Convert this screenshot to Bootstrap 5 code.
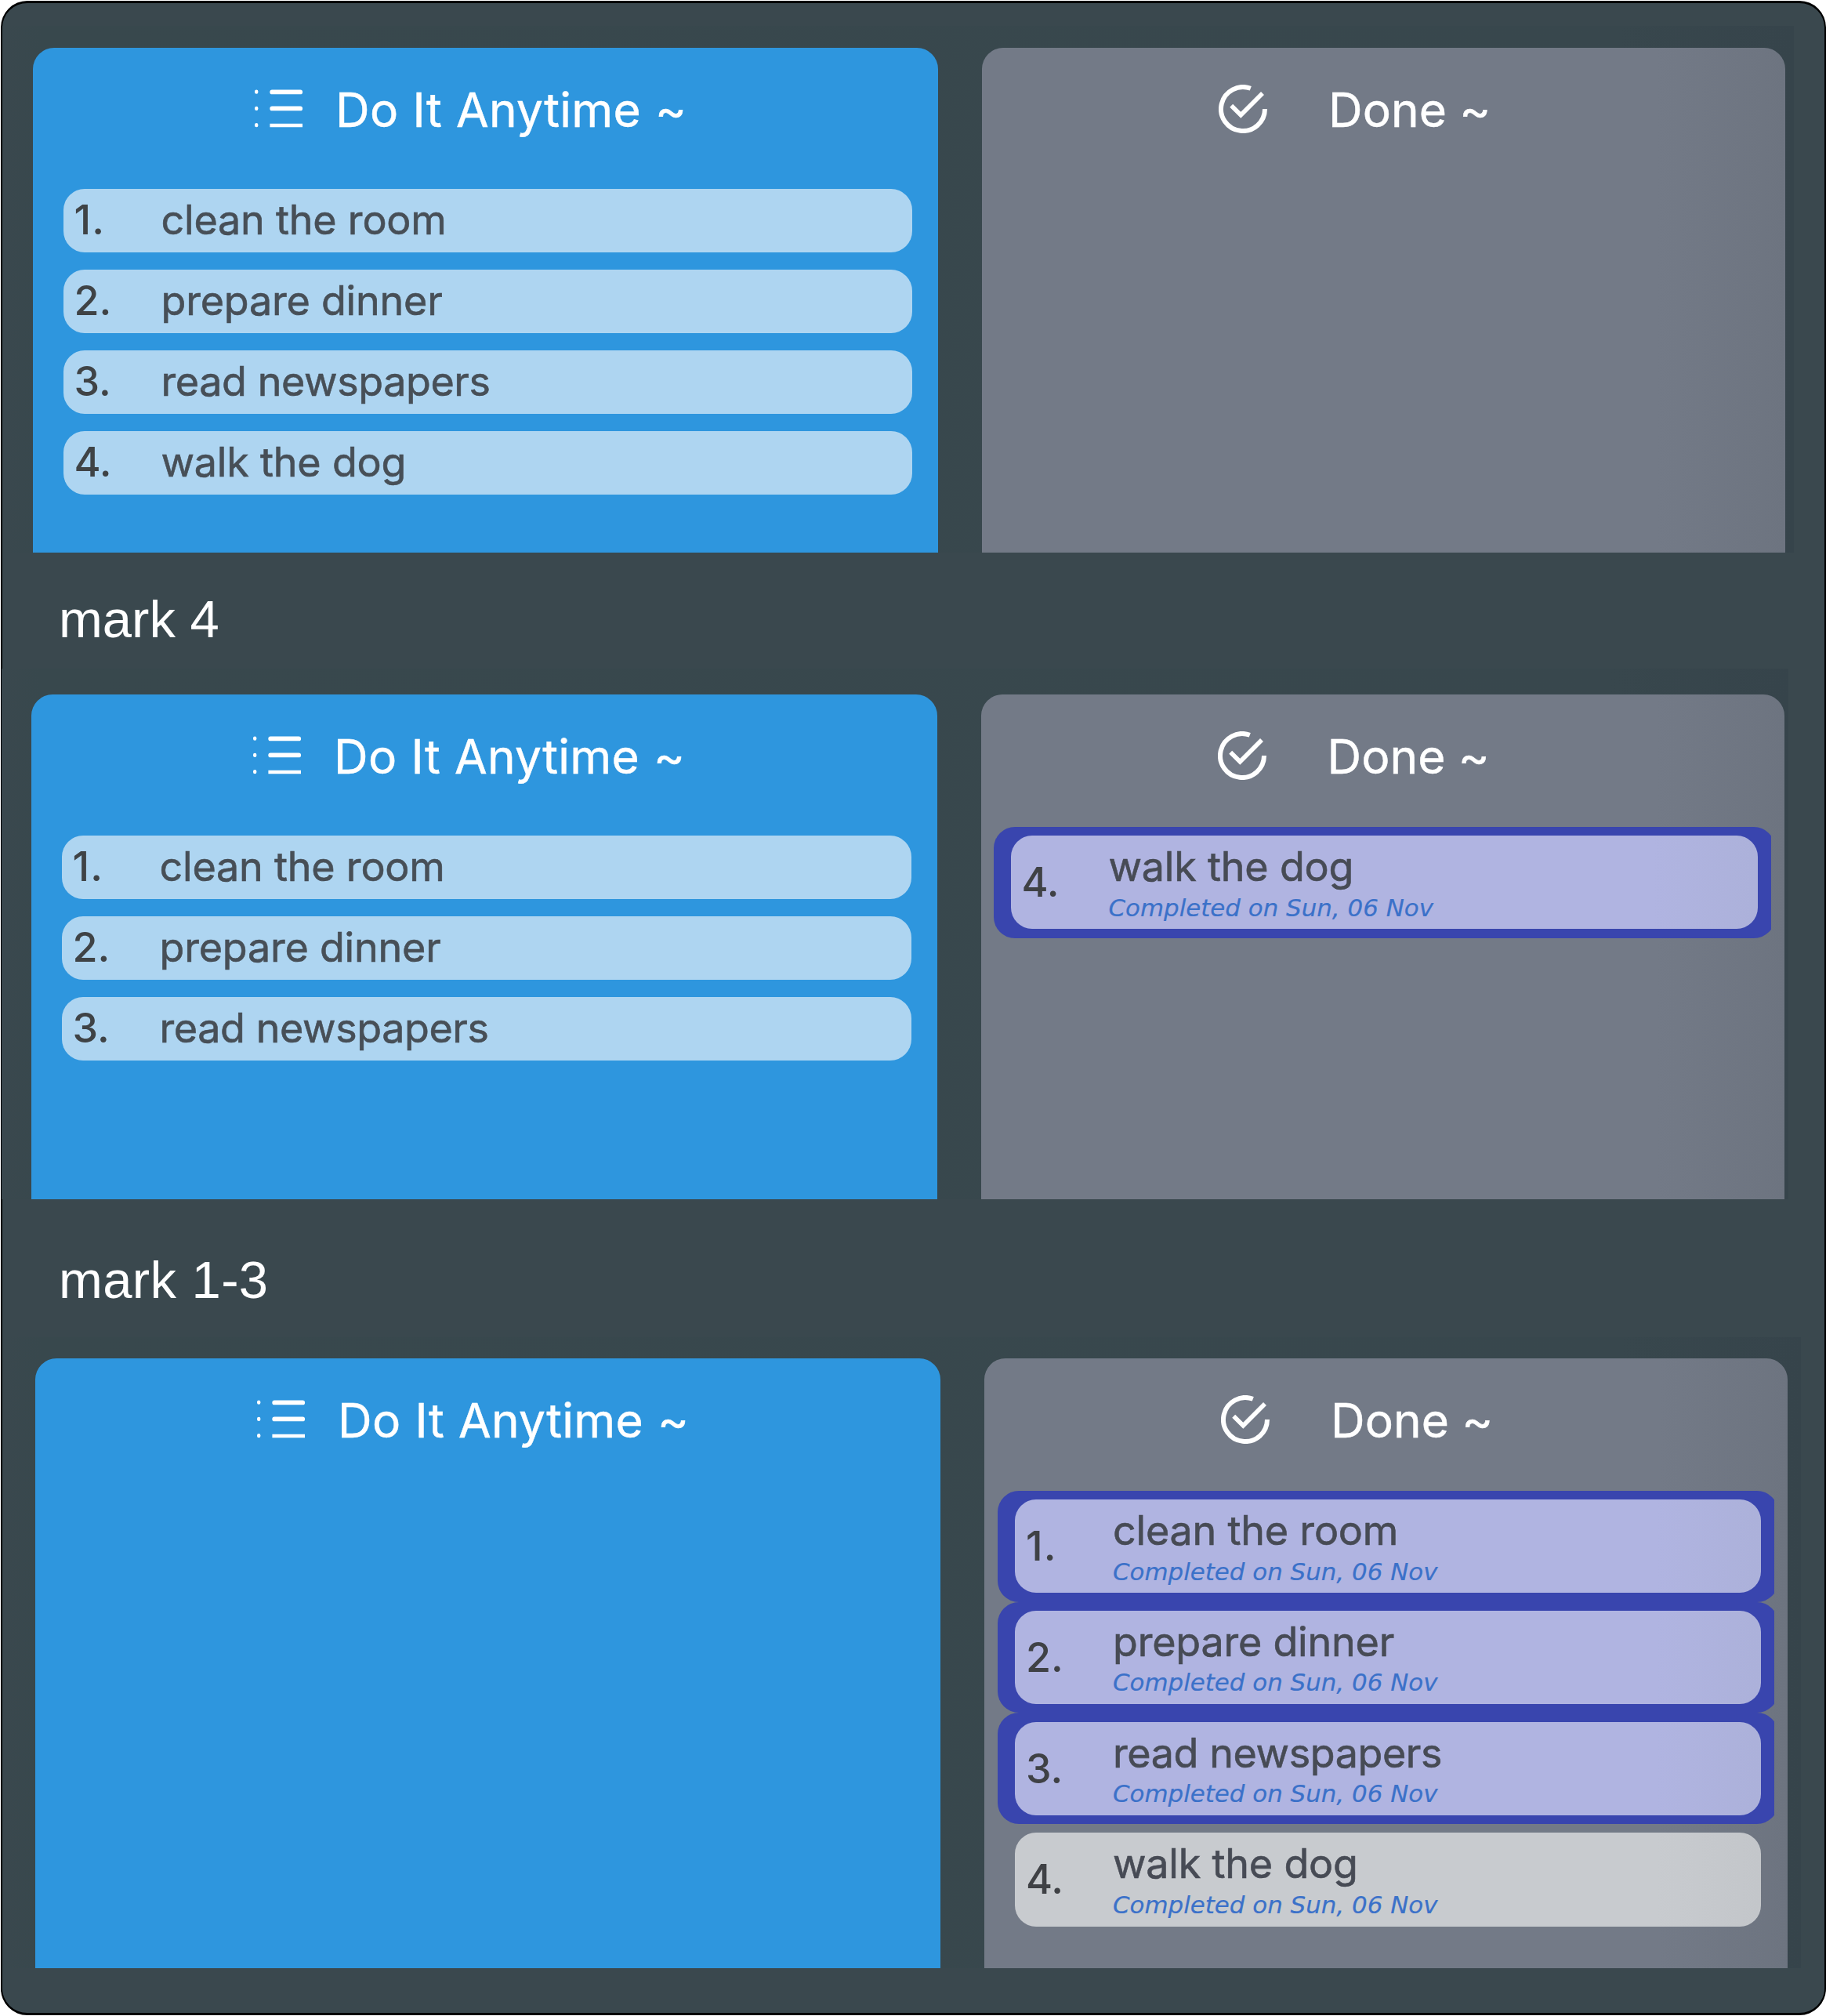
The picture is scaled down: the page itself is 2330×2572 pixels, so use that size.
<!DOCTYPE html>
<html lang="en">
<head>
<meta charset="utf-8">
<meta name="viewport" content="width=device-width, initial-scale=1">
<title>Task board</title>
<link href="https://cdn.jsdelivr.net/npm/bootstrap@5.3.0/dist/css/bootstrap.min.css" rel="stylesheet">
<script src="https://cdn.jsdelivr.net/npm/bootstrap@5.3.0/dist/js/bootstrap.bundle.min.js"></script>
<style>
  body { font-family: Inter, "Liberation Sans", sans-serif; background: #fff; }
  .window-frame {
    width: 2329px; height: 2570px; margin: 1px 0 0 1px;
    border: solid #000; border-width: 3px 2px; border-radius: 34px;
    background: #3a484e;
  }
  .board { gap: 56px; background: linear-gradient(90deg, #3a484e 0, #38484d 50px, #38474d 90%, #36444b 100%); }
  .board-a { margin: 29px 39px 0 0; padding: 28px 0 0 39px; }
  .board-b { margin: 0 46px 0 -1px; padding: 33px 0 0 38px; }
  .board-c { margin: 0 30px 0 0; padding: 27px 0 0 42px; }
  .panel { border-radius: 27px 27px 0 0; height: 644px; }
  .board-c .panel { height: 777.7px; }
  .panel-todo { width: 1155px; background: #2e96de; }
  .board-b .panel-todo { width: 1155.5px; }
  .panel-done { width: 1025px; background: linear-gradient(90deg, #737a87 0, #737a87 84%, #6d7480 100%); }
  .panel-head { height: 158px; color: #fff; font-size: 60.4px; line-height: 158px; white-space: nowrap; -webkit-text-stroke: .5px #fff; }
  .panel-todo .panel-head { padding-left: 283px; letter-spacing: .3px; word-spacing: .8px; }
  .panel-done .panel-head { padding-left: 302px; letter-spacing: .1px; word-spacing: -.8px; }
  .panel-todo .glyph { width: 62px; height: 62px; margin-right: 41px; }
  .panel-done .glyph { width: 62px; height: 62px; margin-right: 78px; }
  .glyph { position: relative; top: -1px; }
  .todo-list { gap: 22px; padding: 22px 33px 0 38.5px; margin: 0; }
  .task { border-radius: 27px; color: #474f57; font-size: 52px; letter-spacing: -.2px; white-space: nowrap; padding-left: 14px; -webkit-text-stroke: .6px currentColor; }
  .task-num { width: 111px; color: #3f4346; font-weight: 500; letter-spacing: 0; -webkit-text-stroke: 0; }
  .num-one { letter-spacing: 1.2px; }
  .title-long { letter-spacing: -.4px; }
  .task-todo { height: 81px; line-height: 80.6px; background: #aed5f1; }
  .done-list { margin: 11px 17px 0; overflow: hidden; }
  .board-b .done-list { margin-left: 16px; }
  .slot { height: 141.7px; margin-right: -5px; padding: 11.3px 22px; border-radius: 27px; }
  .slot-new { background: #3945ae; }
  .task-done { height: 119.2px; background: linear-gradient(90deg, #b0b4e1 86%, #acb1da 100%); color: #474b55; }
  .slot-old .task-done { background: linear-gradient(90deg, #c8cbcf 86%, #c3c6ca 100%); }
  .task-done .task-num { line-height: 119px; color: #3f4145; }
  .task-name { line-height: 79.500px; }
  .task-date { font: italic 30.9px/25px "DejaVu Sans", Verdana, sans-serif; letter-spacing: 0; color: #3b71c9; -webkit-text-stroke: .2px #3b71c9; }
  .caption-row { color: #fff; font: 67px/126px "Liberation Sans", Arial, sans-serif; padding-left: 72px; }
  .caption-a { height: 148px; padding-top: 22px; }
  .caption-b { height: 176px; padding-top: 39.5px; letter-spacing: .4px; }
</style>
</head>
<body>
<svg class="d-none" xmlns="http://www.w3.org/2000/svg">
  <symbol id="icon-list" viewBox="0 0 62 62">
    <g stroke="#fff" stroke-linecap="round" fill="none">
      <path stroke-width="5.8" d="M22.2 9.400H58.200M22.2 30.400H58.200"/>
      <path stroke-width="4.600" stroke-linecap="butt" d="M19.400 52H61"/>
      <path stroke-width="4.400" d="M2.200 8.800v.8M2.200 30v.8M2.200 51.200v.8"/>
    </g>
  </symbol>
  <symbol id="icon-check" viewBox="0 0 62 62">
    <g stroke="#fff" stroke-width="6" fill="none">
      <path d="M40.800 4.800A28 28 0 1 0 59 31"/>
      <path stroke-width="5.600" d="M16.200 26.800 28.300 38.800 56 11"/>
    </g>
  </symbol>
</svg>

<main class="window-frame">
  <section class="board board-a d-flex">
    <div class="panel panel-todo">
      <header class="panel-head d-flex align-items-center"><svg class="glyph flex-shrink-0"><use href="#icon-list"/></svg><span>Do It Anytime ~</span></header>
      <ol class="todo-list list-unstyled d-flex flex-column">
        <li class="task task-todo d-flex"><span class="task-num num-one">1.</span><span>clean the room</span></li>
        <li class="task task-todo d-flex"><span class="task-num">2.</span><span>prepare dinner</span></li>
        <li class="task task-todo d-flex"><span class="task-num">3.</span><span class="title-long">read newspapers</span></li>
        <li class="task task-todo d-flex"><span class="task-num">4.</span><span>walk the dog</span></li>
      </ol>
    </div>
    <div class="panel panel-done">
      <header class="panel-head d-flex align-items-center"><svg class="glyph flex-shrink-0"><use href="#icon-check"/></svg><span>Done ~</span></header>
    </div>
  </section>

  <div class="caption-row caption-a">mark 4</div>

  <section class="board board-b d-flex">
    <div class="panel panel-todo">
      <header class="panel-head d-flex align-items-center"><svg class="glyph flex-shrink-0"><use href="#icon-list"/></svg><span>Do It Anytime ~</span></header>
      <ol class="todo-list list-unstyled d-flex flex-column">
        <li class="task task-todo d-flex"><span class="task-num num-one">1.</span><span>clean the room</span></li>
        <li class="task task-todo d-flex"><span class="task-num">2.</span><span>prepare dinner</span></li>
        <li class="task task-todo d-flex"><span class="task-num">3.</span><span class="title-long">read newspapers</span></li>
      </ol>
    </div>
    <div class="panel panel-done">
      <header class="panel-head d-flex align-items-center"><svg class="glyph flex-shrink-0"><use href="#icon-check"/></svg><span>Done ~</span></header>
      <ol class="done-list list-unstyled">
        <li class="slot slot-new"><div class="task task-done d-flex"><span class="task-num">4.</span><div><div class="task-name">walk the dog</div><div class="task-date">Completed on Sun, 06 Nov</div></div></div></li>
      </ol>
    </div>
  </section>

  <div class="caption-row caption-b">mark 1-3</div>

  <section class="board board-c d-flex">
    <div class="panel panel-todo">
      <header class="panel-head d-flex align-items-center"><svg class="glyph flex-shrink-0"><use href="#icon-list"/></svg><span>Do It Anytime ~</span></header>
    </div>
    <div class="panel panel-done">
      <header class="panel-head d-flex align-items-center"><svg class="glyph flex-shrink-0"><use href="#icon-check"/></svg><span>Done ~</span></header>
      <ol class="done-list list-unstyled">
        <li class="slot slot-new"><div class="task task-done d-flex"><span class="task-num num-one">1.</span><div><div class="task-name">clean the room</div><div class="task-date">Completed on Sun, 06 Nov</div></div></div></li>
        <li class="slot slot-new"><div class="task task-done d-flex"><span class="task-num">2.</span><div><div class="task-name">prepare dinner</div><div class="task-date">Completed on Sun, 06 Nov</div></div></div></li>
        <li class="slot slot-new"><div class="task task-done d-flex"><span class="task-num">3.</span><div><div class="task-name title-long">read newspapers</div><div class="task-date">Completed on Sun, 06 Nov</div></div></div></li>
        <li class="slot slot-old"><div class="task task-done d-flex"><span class="task-num">4.</span><div><div class="task-name">walk the dog</div><div class="task-date">Completed on Sun, 06 Nov</div></div></div></li>
      </ol>
    </div>
  </section>
</main>
</body>
</html>
